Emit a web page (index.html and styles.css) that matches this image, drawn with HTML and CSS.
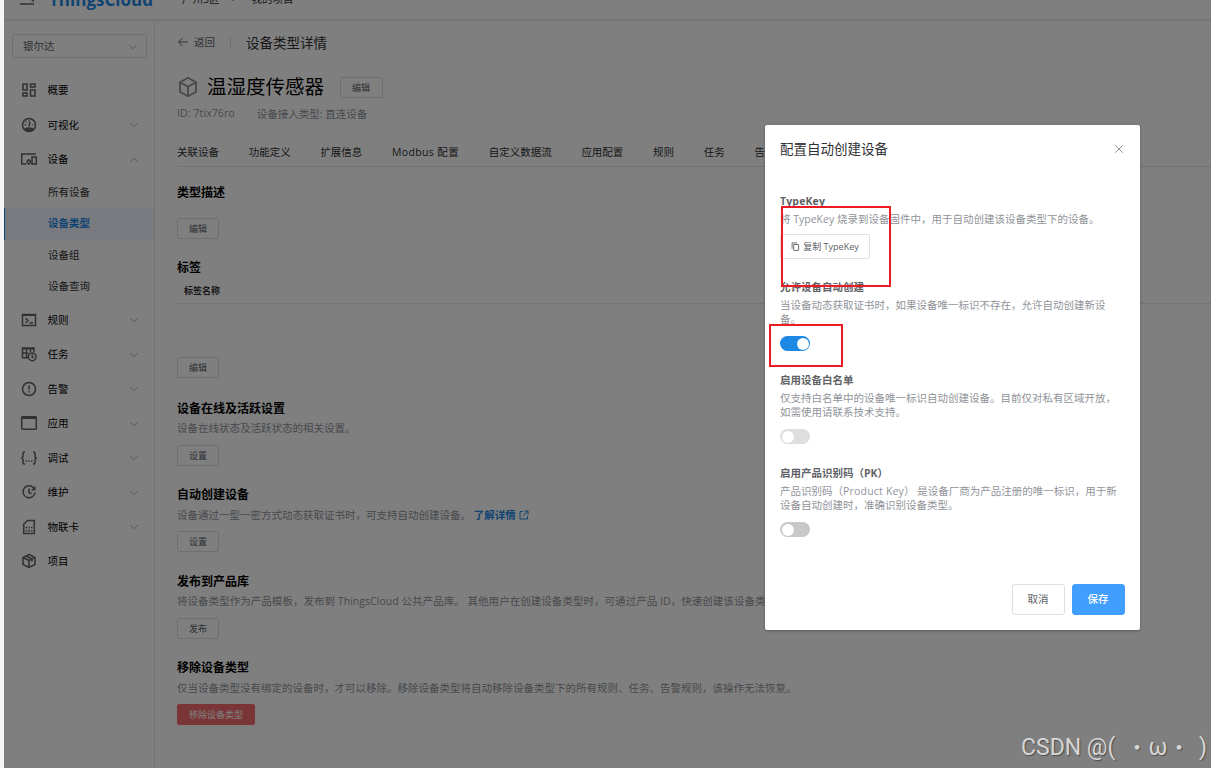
FILE: index.html
```html
<!DOCTYPE html>
<html lang="zh-CN">
<head>
    <meta charset="UTF-8">
    <meta name="viewport" content="width=device-width, initial-scale=1.0">
    <title>设备类型详情 - ThingsCloud</title>
    <link rel="stylesheet" href="styles.css">
</head>
<body>
    <div class="app">
        <header class="header">
            <svg class="fold" viewBox="0 0 16 14"><path d="M1 2h14M1 7h9M1 12h14M15 4.500l-3 2.500 3 2.500"/></svg>
            <span class="logo">ThingsCloud</span>
            <span class="region">广州5区</span>
            <span class="caret"></span>
            <span>我的项目</span>
        </header>

        <div class="layout">
            <aside class="sidebar">
                <div class="select">
                    <span>银尔达</span>
                    <svg class="arrow" viewBox="0 0 8 8"><path d="M.5 2.200L4 5.700l3.500-3.500"/></svg>
                </div>

                <nav class="menu">
                    <div class="menu-item">
                        <svg class="icon" viewBox="0 0 18 18"><path d="M3 3h4v6H3zM10.500 3H15v3h-4.500zM3 12h4v3H3zM10.500 9H15v6h-4.500z"/></svg>
                        <span>概要</span>
                    </div>
                    <div class="menu-item">
                        <svg class="icon" viewBox="0 0 18 18"><circle cx="9" cy="9" r="6.500"/><path d="M9 10.500l1-5M4.800 8.700h1.200M6 5.500l.7.700M12.500 8.700h.8M9 4.300v.8"/><path class="fill" d="M4 13.500c1.500-3 8.500-3 10 0-2.500 2.800-7.500 2.800-10 0z"/></svg>
                        <span>可视化</span>
                        <svg class="arrow" viewBox="0 0 8 8"><path d="M.5 2.200L4 5.700l3.500-3.500"/></svg>
                    </div>
                    <div class="menu-item">
                        <svg class="icon" viewBox="0 0 18 18"><path d="M16 4H1.700v10H6M12 7h4.300v7H12z"/><circle cx="8.700" cy="12" r="1.700"/><path d="M8.700 9v1.500M8.700 13.500V15"/></svg>
                        <span>设备</span>
                        <svg class="arrow" viewBox="0 0 8 8"><path d="M.5 5.700L4 2.200l3.500 3.500"/></svg>
                    </div>
                    <div class="sub-item">所有设备</div>
                    <div class="sub-item active">设备类型</div>
                    <div class="sub-item">设备组</div>
                    <div class="sub-item">设备查询</div>
                    <div class="menu-item">
                        <svg class="icon" viewBox="0 0 18 18"><path d="M2.500 3.500h13v11h-13zM2.500 4.200h13M5.500 7.200L8 9.500l-2.500 2.300M9.500 12H13"/></svg>
                        <span>规则</span>
                        <svg class="arrow" viewBox="0 0 8 8"><path d="M.5 2.200L4 5.700l3.500-3.500"/></svg>
                    </div>
                    <div class="menu-item">
                        <svg class="icon" viewBox="0 0 18 18"><path d="M8 12.800H2.500V3h11.500v4M2.500 3.700H14M2.500 8h6M6.500 3.500v9M10.500 3.500v3.500"/><circle cx="12.200" cy="11.800" r="3.900"/><path d="M12.200 9.500V12l1.500 1"/></svg>
                        <span>任务</span>
                        <svg class="arrow" viewBox="0 0 8 8"><path d="M.5 2.200L4 5.700l3.500-3.500"/></svg>
                    </div>
                    <div class="menu-item">
                        <svg class="icon" viewBox="0 0 18 18"><circle cx="9" cy="9" r="6.500"/><path d="M9 5.500v4.300M9 11v1.500"/></svg>
                        <span>告警</span>
                        <svg class="arrow" viewBox="0 0 8 8"><path d="M.5 2.200L4 5.700l3.500-3.500"/></svg>
                    </div>
                    <div class="menu-item">
                        <svg class="icon" viewBox="0 0 18 18"><rect x="1.700" y="2.700" width="14.600" height="12.600" rx="1"/><path class="fill" d="M1.800 2.500h14.400v2.500H1.800z"/></svg>
                        <span>应用</span>
                        <svg class="arrow" viewBox="0 0 8 8"><path d="M.5 2.200L4 5.700l3.500-3.500"/></svg>
                    </div>
                    <div class="menu-item">
                        <svg class="icon" viewBox="0 0 18 18"><path d="M5 3H4.200Q3 3 3 4.500v2.300Q3 9 1.200 9 3 9 3 11.200v2.300Q3 15 4.200 15H5M13 3h.8Q15 3 15 4.500v2.300Q15 9 16.800 9 15 9 15 11.200v2.300Q15 15 13.800 15H13M5.700 12h1.300M8.400 12h1.300M11.100 12h1.300"/></svg>
                        <span>调试</span>
                        <svg class="arrow" viewBox="0 0 8 8"><path d="M.5 2.200L4 5.700l3.500-3.500"/></svg>
                    </div>
                    <div class="menu-item">
                        <svg class="icon" viewBox="0 0 18 18"><path d="M13.500 4.800A6 6 0 1 0 15 9.500M9 5.500V9.500l2.500 1.300"/><path class="fill" d="M15.500 2.800v4.700H10.800z"/></svg>
                        <span>维护</span>
                        <svg class="arrow" viewBox="0 0 8 8"><path d="M.5 2.200L4 5.700l3.500-3.500"/></svg>
                    </div>
                    <div class="menu-item">
                        <svg class="icon" viewBox="0 0 18 18"><path d="M7.500 2.500h6.800v13H3.700V6.300zM5.500 9.500h1.500M8.300 9.500h1.500M11 9.500h1.500M5.500 12.800h1.500M9 11.500v2.300M11 12.800h1.500"/></svg>
                        <span>物联卡</span>
                        <svg class="arrow" viewBox="0 0 8 8"><path d="M.5 2.200L4 5.700l3.500-3.500"/></svg>
                    </div>
                    <div class="menu-item">
                        <svg class="icon" viewBox="0 0 18 18"><path d="M9 2.500l6 3v7l-6 3-6-3v-7zM3 5.500l6 3 6-3M9 8.500v7M6 4l6 3v2.500"/></svg>
                        <span>项目</span>
                    </div>
                </nav>
            </aside>

            <main class="main">
                <div class="page-header">
                    <svg class="back-icon" viewBox="0 0 12 12"><path d="M11 6H1.500M5.500 2l-4 4 4 4"/></svg>
                    <span class="back">返回</span>
                    <span class="page-title">设备类型详情</span>
                </div>

                <div class="device-title">
                    <svg class="cube" viewBox="0 0 22 22"><path d="M11 1.800l8 4.500v9.400l-8 4.500-8-4.500V6.300zM3 6.300l8 4.500 8-4.500M11 10.800v9.400"/></svg>
                    <h1>温湿度传感器</h1>
                    <button class="btn">编辑</button>
                </div>
                <div class="device-meta">
                    <span class="device-id">ID: 7tix76ro</span>
                    <span>设备接入类型: 直连设备</span>
                </div>

                <div class="tabs">
                    <span>关联设备</span>
                    <span>功能定义</span>
                    <span>扩展信息</span>
                    <span class="tab-modbus">Modbus 配置</span>
                    <span>自定义数据流</span>
                    <span>应用配置</span>
                    <span>规则</span>
                    <span>任务</span>
                    <span>告警</span>
                </div>

                <section class="block desc-block">
                    <h2>类型描述</h2>
                    <button class="btn">编辑</button>
                </section>
                <section class="block tag-block">
                    <h2>标签</h2>
                    <div class="table-head">标签名称</div>
                    <button class="btn">编辑</button>
                </section>
                <section class="block">
                    <h2>设备在线及活跃设置</h2>
                    <p>设备在线状态及活跃状态的相关设置。</p>
                    <button class="btn">设置</button>
                </section>
                <section class="block">
                    <h2>自动创建设备</h2>
                    <p>设备通过一型一密方式动态获取证书时，可支持自动创建设备。 <a class="link">了解详情 <svg class="ext" viewBox="0 0 10 10"><path d="M4 1.500H1v7.500h7.500V6M5.500 1H9v3.500M9 1L4 6"/></svg></a></p>
                    <button class="btn">设置</button>
                </section>
                <section class="block">
                    <h2>发布到产品库</h2>
                    <p class="publish-desc">将设备类型作为产品模板，发布到 ThingsCloud 公共产品库。 其他用户在创建设备类型时，可通过产品 ID，快速创建该设备类型。</p>
                    <button class="btn">发布</button>
                </section>
                <section class="block">
                    <h2>移除设备类型</h2>
                    <p>仅当设备类型没有绑定的设备时，才可以移除。移除设备类型将自动移除设备类型下的所有规则、任务、告警规则，该操作无法恢复。</p>
                    <button class="btn btn-danger">移除设备类型</button>
                </section>
            </main>
        </div>
    </div>

    <div class="overlay"></div>

    <div class="dialog">
        <div class="dialog-header">
            <span>配置自动创建设备</span>
            <svg class="close" viewBox="0 0 10 10"><path d="M1.200 1.200l7.600 7.600M8.800 1.200L1.200 8.800"/></svg>
        </div>
        <div class="dialog-body">
            <div class="form-item">
                <h3 class="key-title">TypeKey</h3>
                <p>将 TypeKey 烧录到设备固件中，用于自动创建该设备类型下的设备。</p>
                <button class="btn btn-copy">
                    <svg viewBox="0 0 10 10"><path d="M3 2.800h5.500v6.500H3zM1.200 7.500V1h5.500"/></svg>
                    复制 TypeKey
                </button>
            </div>
            <div class="form-item">
                <h3>允许设备自动创建</h3>
                <p>当设备动态获取证书时，如果设备唯一标识不存在，允许自动创建新设<br>备。</p>
                <div class="switch on"></div>
            </div>
            <div class="form-item">
                <h3>启用设备白名单</h3>
                <p>仅支持白名单中的设备唯一标识自动创建设备。目前仅对私有区域开放，<br>如需使用请联系技术支持。</p>
                <div class="switch disabled"></div>
            </div>
            <div class="form-item">
                <h3>启用产品识别码（PK）</h3>
                <p>产品识别码（<span class="latin">Product Key</span>） 是设备厂商为产品注册的唯一标识，用于新<br>设备自动创建时，准确识别设备类型。</p>
                <div class="switch"></div>
            </div>
        </div>
        <div class="dialog-footer">
            <button class="btn-lg">取消</button>
            <button class="btn-lg primary">保存</button>
        </div>
        <!-- 红框标注 -->
        <div class="mark mark-key"></div>
        <div class="mark mark-switch"></div>
    </div>

    <div class="watermark"><span class="site">CSDN @(</span><span class="dot">・</span><span class="omega">ω</span><span class="dot">・</span><span class="paren">)</span></div>
</body>
</html>
```
FILE: styles.css
```css
* {
    box-sizing: border-box;
}
body {
    margin: 0;
    padding-left: 4px;
    height: 768px;
    overflow: hidden;
    position: relative;
    background: #f5f6f8;
    font-family: "Open Sans", "Noto Sans CJK SC", sans-serif;
    font-size: 10.5px;
    color: #303133;
    white-space: nowrap;
}
h1, h2, h3, p {
    margin: 0;
}
svg {
    fill: none;
    stroke: currentColor;
    flex-shrink: 0;
}
.app {
    height: 768px;
    background: #fff;
    overflow: hidden;
}
.overlay {
    position: absolute;
    top: 0;
    left: 4px;
    right: 0;
    bottom: 0;
    background: rgba(0, 0, 0, 0.5);
}

/* header */
.header {
    height: 45px;
    margin-top: -25px;
    padding: 2px 0 0 15px;
    display: flex;
    align-items: center;
    border-bottom: 1px solid #e6e6e6;
    box-shadow: 0 1px 3px rgba(0, 0, 0, 0.1);
}
.fold {
    width: 16px;
    height: 14px;
    margin-top: 2px;
    color: #606266;
    stroke-width: 1.5;
}
.logo {
    width: 104px;
    margin: 2px 29px 0 14px;
    font-size: 17px;
    font-weight: 700;
    color: #1e88e5;
}
.caret {
    margin: 2px 16px 0 10px;
    border: 3px solid transparent;
    border-top-color: #606266;
    border-bottom: 0;
}

/* sidebar */
.layout {
    display: flex;
    height: 748px;
}
.sidebar {
    width: 151px;
    flex-shrink: 0;
    padding-top: 14px;
    border-right: 1px solid #e6e6e6;
}
.select {
    width: 135px;
    height: 24px;
    margin: 0 0 15px 8px;
    padding: 0 9px 1px 10px;
    display: flex;
    align-items: center;
    border: 1px solid #dcdfe6;
    border-radius: 3px;
    color: #606266;
}
.arrow {
    width: 8px;
    height: 8px;
    margin: 2px 0 0 auto;
    color: #a0a3aa;
    stroke-width: 0.9;
}
.menu-item {
    height: 34.5px;
    padding: 0 16px 1px 15.5px;
    display: flex;
    align-items: center;
    color: #000;
}
.icon {
    width: 18px;
    height: 18px;
    margin: 1px 10px 0 0;
    color: #606266;
    stroke-width: 1.5;
}
.icon .fill {
    fill: currentColor;
    stroke: none;
}
.sub-item {
    height: 31.5px;
    line-height: 31.5px;
    padding-left: 44px;
    color: #303133;
}
.sub-item.active {
    padding-left: 43px;
    border-left: 1px solid #1e88e5;
    background: #f0f4ff;
    color: #1e88e5;
    font-weight: 700;
}

/* main */
.main {
    flex: 1;
    min-width: 0;
    padding: 13px 0 0 22px;
}
.page-header {
    height: 18px;
    display: flex;
    align-items: center;
}
.back-icon {
    width: 12px;
    height: 12px;
    margin-right: 5px;
    color: #606266;
}
.back {
    color: #606266;
    line-height: 12px;
    padding-right: 15px;
    border-right: 1px solid #dcdfe6;
}
.page-title {
    margin-left: 15px;
    font-size: 13.5px;
}
.device-title {
    height: 28px;
    margin-top: 22px;
    display: flex;
    align-items: center;
}
.cube {
    width: 22px;
    height: 22px;
    margin: 0 8px 0 0;
    color: #909399;
    stroke-width: 1.8;
}
h1 {
    font-size: 19.5px;
    line-height: 28px;
    font-weight: 400;
    color: #000;
    margin-right: 15.5px;
}
.device-title .btn {
    width: 43px;
}
.device-meta {
    height: 14px;
    margin-top: 5px;
    display: flex;
    align-items: center;
    gap: 22px;
    color: #909399;
}
.device-id {
    letter-spacing: 0.1px;
}
.tabs {
    height: 31px;
    margin-top: 16px;
    display: flex;
    align-items: center;
    gap: 29.7px;
    border-bottom: 1px solid #dfe4ed;
    margin-bottom: 17px;
}
.tab-modbus {
    letter-spacing: 0.35px;
}
.block {
    margin-bottom: 20.5px;
}
.block h2 {
    font-size: 12px;
    line-height: 18px;
    color: #000;
}
.block p {
    margin: 1.500px 0 7.500px;
    line-height: 18px;
    color: #909399;
}
.block .publish-desc {
    letter-spacing: 0.04px;
}
.btn {
    display: flex;
    align-items: center;
    justify-content: center;
    width: 42px;
    height: 21px;
    padding: 0;
    font: inherit;
    font-size: 9px;
    color: #606266;
    background: #fff;
    border: 1px solid #dcdfe6;
    border-radius: 2px;
}
.btn-danger {
    width: 78px;
    color: #fff;
    background: #f56c6c;
    border-color: #f56c6c;
}
.desc-block .btn {
    margin-top: 16px;
}
.table-head {
    height: 27px;
    line-height: 27px;
    margin-bottom: 53px;
    padding-left: 7px;
    font-size: 9px;
    font-weight: 700;
    border-bottom: 1px solid #e6e9f0;
}
.desc-block .btn {
    margin-top: 15.5px;
}
.tag-block {
    margin-bottom: 21.5px;
}
.link {
    color: #1e88e5;
    font-weight: 700;
}
.ext {
    width: 10px;
    height: 10px;
    margin-left: 1px;
    vertical-align: -1px;
}

/* dialog */
.dialog {
    position: absolute;
    left: 765px;
    top: 125px;
    width: 375px;
    height: 505px;
    padding: 14px 15px 15px;
    background: #fff;
    border-radius: 2px;
    box-shadow: 0 1px 3px rgba(0, 0, 0, 0.3);
    display: flex;
    flex-direction: column;
}
.dialog-header {
    height: 18px;
    display: flex;
    align-items: center;
    justify-content: space-between;
    font-size: 13.5px;
}
.close {
    width: 10px;
    height: 10px;
    margin: 2px 1px 0 0;
    color: #909399;
}
.dialog-body {
    margin-top: 35px;
}
.form-item {
    margin-bottom: 20px;
}
.form-item:first-child {
    margin-bottom: 19px;
}
.form-item h3 {
    font-size: 10.5px;
    line-height: 18px;
    color: #606266;
}
.form-item .key-title {
    letter-spacing: 0.15px;
}
.form-item p {
    margin: 2px 0 10px;
    line-height: 14px;
    color: #909399;
}
.latin {
    letter-spacing: 0.2px;
}
.btn-copy {
    width: 90px;
    height: 25px;
    margin-top: -2px;
    gap: 3px;
}
.btn-copy svg {
    width: 9px;
    height: 9px;
}
.switch {
    width: 30px;
    height: 15px;
    padding: 1.5px;
    display: flex;
    border-radius: 8px;
    background: #c8c8c8;
}
.switch::before {
    content: "";
    width: 12px;
    height: 12px;
    border-radius: 50%;
    background: #fff;
}
.switch.on {
    justify-content: flex-end;
    background: #1e88e5;
}
.switch.disabled {
    background: #dedede;
}
.dialog-footer {
    margin-top: auto;
    display: flex;
    justify-content: flex-end;
    gap: 7px;
}
.btn-lg {
    width: 53px;
    height: 31px;
    padding: 0 1px 2px 0;
    font: inherit;
    color: #606266;
    background: #fff;
    border: 1px solid #dcdfe6;
    border-radius: 3px;
}
.btn-lg.primary {
    color: #fff;
    background: #409eff;
    border-color: #409eff;
    font-weight: 500;
}
.mark {
    position: absolute;
    border: 2px solid #ed1c24;
}
.mark-key {
    left: 16px;
    top: 81px;
    width: 110px;
    height: 81px;
}
.mark-switch {
    left: 4px;
    top: 199px;
    width: 74px;
    height: 43px;
}

.watermark {
    position: absolute;
    left: 1021px;
    top: 734px;
    display: flex;
    line-height: 28px;
    font-family: Roboto, "Noto Sans CJK SC", sans-serif;
    font-size: 23px;
    color: #d6d6d6;
    text-shadow: 1px 1px 1px rgba(0, 0, 0, 0.4);
}
.site {
    width: 105px;
}
.dot {
    width: 22px;
    font-size: 22px;
}
.omega {
    width: 20px;
    text-align: center;
}
.paren {
    margin-left: 9px;
}
```
